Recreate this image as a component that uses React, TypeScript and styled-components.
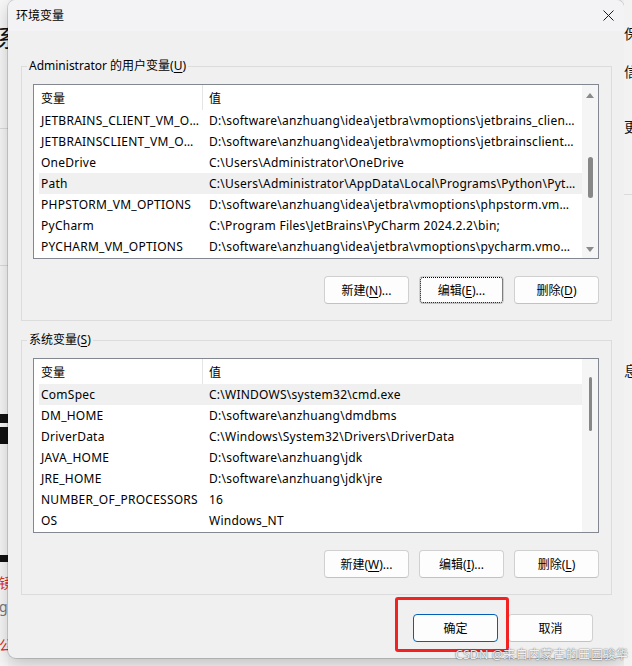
import React from "react";
import styled, { createGlobalStyle } from "styled-components";

const UI_FONT = `"Noto Sans", "Noto Sans CJK SC", sans-serif`;

const GlobalStyle = createGlobalStyle`
  html, body {
    margin: 0;
    padding: 0;
  }
  body {
    width: 632px;
    height: 666px;
    overflow: hidden;
    background: #f4f4f4;
    font-family: ${UI_FONT};
    font-size: 12px;
    color: #000;
  }
`;

type EnvVar = [string, string];

const userVars: EnvVar[] = [
  ["JETBRAINS_CLIENT_VM_OPTIONS", "D:\\software\\anzhuang\\idea\\jetbra\\vmoptions\\jetbrains_client.vmoptions"],
  ["JETBRAINSCLIENT_VM_OPTIONS", "D:\\software\\anzhuang\\idea\\jetbra\\vmoptions\\jetbrainsclient.vmoptions"],
  ["OneDrive", "C:\\Users\\Administrator\\OneDrive"],
  ["Path", "C:\\Users\\Administrator\\AppData\\Local\\Programs\\Python\\Python312\\Scripts\\;"],
  ["PHPSTORM_VM_OPTIONS", "D:\\software\\anzhuang\\idea\\jetbra\\vmoptions\\phpstorm.vmoptions"],
  ["PyCharm", "C:\\Program Files\\JetBrains\\PyCharm 2024.2.2\\bin;"],
  ["PYCHARM_VM_OPTIONS", "D:\\software\\anzhuang\\idea\\jetbra\\vmoptions\\pycharm.vmoptions"],
];

const sysVars: EnvVar[] = [
  ["ComSpec", "C:\\WINDOWS\\system32\\cmd.exe"],
  ["DM_HOME", "D:\\software\\anzhuang\\dmdbms"],
  ["DriverData", "C:\\Windows\\System32\\Drivers\\DriverData"],
  ["JAVA_HOME", "D:\\software\\anzhuang\\jdk"],
  ["JRE_HOME", "D:\\software\\anzhuang\\jdk\\jre"],
  ["NUMBER_OF_PROCESSORS", "16"],
  ["OS", "Windows_NT"],
];

const Desktop = styled.div`
  position: relative;
  display: flex;
  width: 632px;
  height: 666px;
  overflow: hidden;
`;

const Strip = styled.div<{ $bg: string }>`
  width: 8px;
  flex-shrink: 0;
  overflow: hidden;
  display: flex;
  flex-direction: column;
  background: ${(p) => p.$bg};
`;

const StripGlyph = styled.div<{ $top: number; $size?: number; $color?: string; $shift?: number }>`
  margin-top: ${(p) => p.$top}px;
  margin-left: ${(p) => p.$shift ?? 0}px;
  font-size: ${(p) => p.$size ?? 14}px;
  line-height: 1;
  color: ${(p) => p.$color ?? "#111"};
  white-space: nowrap;
`;

const StripRule = styled.div<{ $top: number }>`
  margin-top: ${(p) => p.$top}px;
  height: 1px;
  flex-shrink: 0;
  background: #dcdcdc;
`;

const StripBar = styled.div<{ $top: number; $height: number }>`
  margin-top: ${(p) => p.$top}px;
  height: ${(p) => p.$height}px;
  flex-shrink: 0;
  background: #111;
`;

const Dialog = styled.div`
  width: 616px;
  height: 658px;
  flex-shrink: 0;
  display: flex;
  flex-direction: column;
  background: #f0f0f0;
  border-radius: 8px;
  box-shadow: 0 0 0 1px rgba(0, 0, 0, 0.14), 0 6px 18px rgba(0, 0, 0, 0.22);
  overflow: hidden;
`;

const TitleBar = styled.div`
  height: 31px;
  flex-shrink: 0;
  display: flex;
  align-items: center;
  justify-content: space-between;
  padding: 0 10px 0 8px;
  background: #f3f3f6;
`;

const Title = styled.span`
  font-size: 12px;
  line-height: 16px;
  color: #000;
`;

const CloseIcon = () => (
  <svg width="11" height="11" viewBox="0 0 11 11">
    <path d="M0.5 0.5 L10.5 10.5 M10.5 0.5 L0.5 10.5" stroke="#1b1b1b" strokeWidth="1" fill="none" />
  </svg>
);

const Body = styled.div`
  display: flex;
  flex-direction: column;
  padding: 27px 12px 0 13px;
  gap: 11px;
`;

const Group = styled.fieldset`
  margin: 0;
  padding: 10px 12px 16px 11px;
  border: 1px solid #dcdcdc;
  min-width: 0;
  display: flex;
  flex-direction: column;
`;

const GroupLabel = styled.legend`
  margin-left: -6px;
  padding: 0 2px;
  font-size: 12px;
  line-height: 16px;
`;

const Key = styled.span`
  text-decoration: underline;
  text-underline-offset: 2px;
`;

const ListBox = styled.div`
  height: 175px;
  box-sizing: border-box;
  border: 1px solid #828790;
  background: #fff;
  display: flex;
`;

const Table = styled.div`
  flex: 1;
  min-width: 0;
  padding-left: 5px;
  display: flex;
  flex-direction: column;
`;

const HeaderRow = styled.div`
  height: 25px;
  flex-shrink: 0;
  display: flex;
  align-items: stretch;
`;

const HeaderCell = styled.div<{ $first?: boolean }>`
  display: flex;
  align-items: center;
  box-sizing: border-box;
  width: ${(p) => (p.$first ? "164px" : "auto")};
  flex: ${(p) => (p.$first ? "none" : "1")};
  padding-left: ${(p) => (p.$first ? "2px" : "6px")};
  border-right: ${(p) => (p.$first ? "1px solid #e5e5e5" : "none")};
`;

const Row = styled.div<{ $selected?: boolean }>`
  height: 21px;
  flex-shrink: 0;
  display: flex;
  align-items: center;
  background: ${(p) => (p.$selected ? "#f0f0f0" : "transparent")};
`;

const Cell = styled.div<{ $first?: boolean }>`
  box-sizing: border-box;
  width: ${(p) => (p.$first ? "164px" : "auto")};
  flex: ${(p) => (p.$first ? "none" : "1")};
  min-width: 0;
  padding: ${(p) => (p.$first ? "0 3px 0 2px" : "0 6px 0 6px")};
  white-space: nowrap;
  overflow: hidden;
  text-overflow: ellipsis;
  line-height: 21px;
  letter-spacing: 0.25px;
`;

const ScrollTrack = styled.div`
  width: 16px;
  flex-shrink: 0;
  display: flex;
  flex-direction: column;
  align-items: center;
  background: #f5f5f5;
`;

const ArrowBox = styled.div<{ $height: number }>`
  height: ${(p) => p.$height}px;
  display: flex;
  align-items: center;
  justify-content: center;
`;

const Thumb = styled.div<{ $top: number; $height: number; $width: number }>`
  margin-top: ${(p) => p.$top}px;
  width: ${(p) => p.$width}px;
  height: ${(p) => p.$height}px;
  border-radius: 3px;
  background: #878787;
`;

const Filler = styled.div`
  flex: 1;
`;

const Triangle = ({ up }: { up?: boolean }) => (
  <svg width="8" height="5" viewBox="0 0 8 5">
    <path d={up ? "M4 0 L8 5 L0 5 Z" : "M0 0 L8 0 L4 5 Z"} fill="#8a8a8a" />
  </svg>
);

type ScrollProps = { arrows: boolean; top: number; height: number; width: number };

const ScrollBar = ({ arrows, top, height, width }: ScrollProps) => (
  <ScrollTrack>
    {arrows && (
      <ArrowBox $height={20}>
        <Triangle up />
      </ArrowBox>
    )}
    <Thumb $top={top} $height={height} $width={width} />
    <Filler />
    {arrows && (
      <ArrowBox $height={17}>
        <Triangle />
      </ArrowBox>
    )}
  </ScrollTrack>
);

const VarList = ({ rows, selected, scroll }: { rows: EnvVar[]; selected: number; scroll: ScrollProps }) => (
  <ListBox>
    <Table>
      <HeaderRow>
        <HeaderCell $first>变量</HeaderCell>
        <HeaderCell>值</HeaderCell>
      </HeaderRow>
      {rows.map(([name, value], i) => (
        <Row key={name} $selected={i === selected}>
          <Cell $first>{name}</Cell>
          <Cell>{value}</Cell>
        </Row>
      ))}
    </Table>
    <ScrollBar {...scroll} />
  </ListBox>
);

const ButtonRow = styled.div`
  margin-top: 17px;
  display: flex;
  justify-content: flex-end;
  gap: 10px;
`;

const Button = styled.button<{ $focused?: boolean; $primary?: boolean }>`
  width: 85px;
  height: 28px;
  box-sizing: border-box;
  padding: 0;
  font-family: ${UI_FONT};
  font-size: 12px;
  color: #000;
  background: #fdfdfd;
  border: 1px solid ${(p) => (p.$primary ? "#005fb8" : "#d0d0d0")};
  border-bottom-color: ${(p) => (p.$primary ? "#005fb8" : "#c2c2c2")};
  border-radius: 4px;
  outline: ${(p) => (p.$focused ? "1px dotted #000" : "none")};
  outline-offset: -2px;
`;

const Footer = styled.div`
  margin-top: 19px;
  display: flex;
  justify-content: flex-end;
  gap: 10px;
  padding-right: 31px;
`;

const Annotation = styled.div`
  position: absolute;
  left: 395px;
  top: 597px;
  width: 114px;
  height: 55px;
  box-sizing: border-box;
  border: 3px solid #f22222;
  border-radius: 3px;
  pointer-events: none;
`;

const Watermark = styled.div`
  position: absolute;
  right: 4px;
  bottom: 4px;
  font-size: 12.5px;
  line-height: 15px;
  color: rgba(255, 255, 255, 0.92);
  text-shadow: 0 0 1px rgba(0, 0, 0, 0.55), 0 0 2px rgba(0, 0, 0, 0.35);
  white-space: nowrap;
`;

export default function App() {
  return (
    <>
      <GlobalStyle />
      <Desktop>
        <Strip $bg="#f7f7f7">
          <StripGlyph $top={26} $size={24} $shift={-3}>系</StripGlyph>
          <StripRule $top={78} />
          <StripRule $top={136} />
          <StripBar $top={148} $height={9} />
          <StripBar $top={4} $height={17} />
          <StripBar $top={111} $height={7} />
          <StripGlyph $top={14} $size={14} $color="#e0301e" $shift={-1}>镜</StripGlyph>
          <StripGlyph $top={10} $size={14} $color="#777" $shift={-1}>g</StripGlyph>
          <StripGlyph $top={24} $size={14} $color="#e0301e" $shift={-1}>公</StripGlyph>
        </Strip>
        <Dialog>
          <TitleBar>
            <Title>环境变量</Title>
            <CloseIcon />
          </TitleBar>
          <Body>
            <Group>
              <GroupLabel>
                Administrator 的用户变量(<Key>U</Key>)
              </GroupLabel>
              <VarList rows={userVars} selected={3} scroll={{ arrows: true, top: 52, height: 41, width: 5 }} />
              <ButtonRow>
                <Button>新建(<Key>N</Key>)...</Button>
                <Button $focused>编辑(<Key>E</Key>)...</Button>
                <Button>删除(<Key>D</Key>)</Button>
              </ButtonRow>
            </Group>
            <Group>
              <GroupLabel>
                系统变量(<Key>S</Key>)
              </GroupLabel>
              <VarList rows={sysVars} selected={0} scroll={{ arrows: false, top: 18, height: 54, width: 3 }} />
              <ButtonRow>
                <Button>新建(<Key>W</Key>)...</Button>
                <Button>编辑(<Key>I</Key>)...</Button>
                <Button>删除(<Key>L</Key>)</Button>
              </ButtonRow>
            </Group>
          </Body>
          <Footer>
            <Button $primary>确定</Button>
            <Button>取消</Button>
          </Footer>
        </Dialog>
        <Strip $bg="#f2f2f2">
          <StripGlyph $top={27} $size={14}>保</StripGlyph>
          <StripGlyph $top={24} $size={14}>信</StripGlyph>
          <StripGlyph $top={41} $size={14}>更</StripGlyph>
          <StripRule $top={60} />
          <StripGlyph $top={169} $size={14}>息</StripGlyph>
        </Strip>
        <Annotation />
        <Watermark>CSDN @来自内蒙古的田园骏华</Watermark>
      </Desktop>
    </>
  );
}
